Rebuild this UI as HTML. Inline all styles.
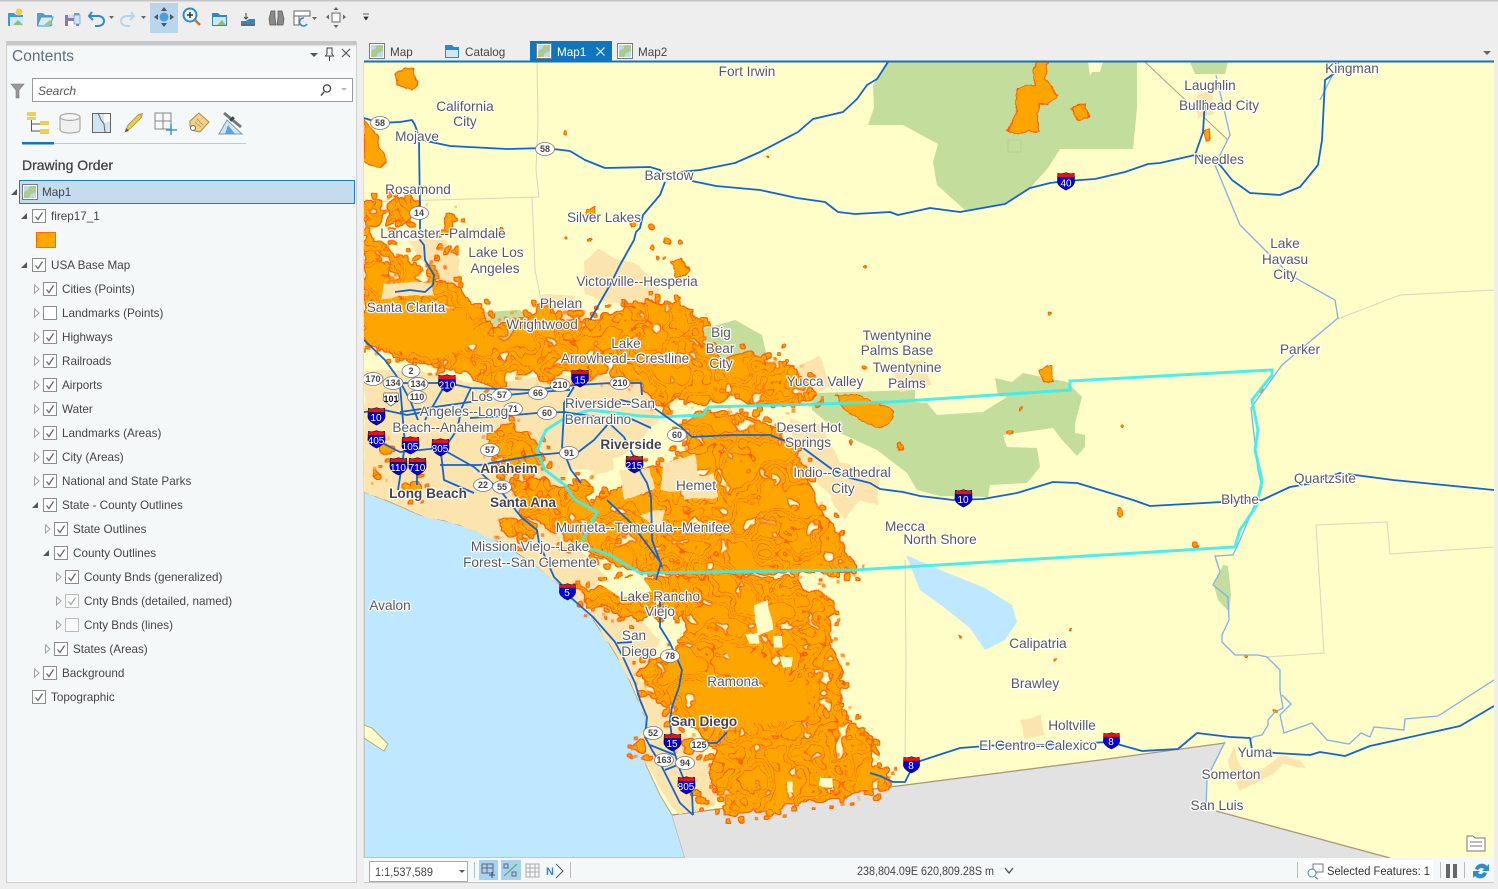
<!DOCTYPE html>
<html><head><meta charset="utf-8"><title>Map</title>
<style>
html,body{margin:0;padding:0;background:#eee;overflow:hidden}
svg{display:block}
text{font-family:"Liberation Sans",sans-serif}
.t{font-size:11.7px;fill:#444}
.m text{font-size:13.6px;fill:#58585e;text-anchor:middle;paint-order:stroke;stroke:#fff;stroke-width:2.4px;stroke-linejoin:round}
.m text.b{font-weight:bold;fill:#44444a;font-size:13.6px}
.h{fill:none;stroke:#0f64d8;stroke-width:1.8;stroke-linejoin:round}
.o text{font-size:9px;font-weight:bold;fill:#444;text-anchor:middle}
.o ellipse{fill:#fff;stroke:#777;stroke-width:.8}
.i text{font-size:10px;fill:#fff;text-anchor:middle}
.c{fill:none;stroke:#d8d6c0;stroke-width:1}
.f{fill:#ffa500;stroke:#ff6000;stroke-width:1.2}
.p{fill:#fce4ae}
.y{fill:#fffdc8}
</style></head><body>
<svg xmlns="http://www.w3.org/2000/svg" xmlns:xlink="http://www.w3.org/1999/xlink" width="1498" height="889" viewBox="0 0 1498 889">
<defs>
<filter id="r" filterUnits="userSpaceOnUse" x="364" y="62" width="1134" height="796"><feTurbulence type="fractalNoise" baseFrequency=".09" numOctaves="3" seed="4"/><feDisplacementMap in="SourceGraphic" scale="7" xChannelSelector="R" yChannelSelector="G"/></filter>
<filter id="s" filterUnits="userSpaceOnUse" x="364" y="62" width="1134" height="796"><feTurbulence type="fractalNoise" baseFrequency=".05" numOctaves="2" seed="9"/><feDisplacementMap in="SourceGraphic" scale="6" xChannelSelector="R" yChannelSelector="G"/></filter>
<filter id="fire" filterUnits="userSpaceOnUse" x="364" y="62" width="1134" height="796" color-interpolation-filters="sRGB">
<feTurbulence type="fractalNoise" baseFrequency=".07" numOctaves="3" seed="4" result="n0"/>
<feDisplacementMap in="SourceGraphic" in2="n0" scale="14" xChannelSelector="R" yChannelSelector="G" result="D"/>
<feTurbulence type="fractalNoise" baseFrequency=".11" numOctaves="2" seed="7" result="n1"/>
<feColorMatrix in="n1" type="matrix" values="0 0 0 0 0  0 0 0 0 0  0 0 0 0 0  20 0 0 0 -12.400" result="B"/>
<feMorphology in="D" operator="dilate" radius="7" result="Dd"/>
<feComposite in="B" in2="Dd" operator="in" result="F"/>
<feTurbulence type="fractalNoise" baseFrequency=".06" numOctaves="2" seed="21" result="n2"/>
<feColorMatrix in="n2" type="matrix" values="0 0 0 0 0  0 0 0 0 0  0 0 0 0 0  0 20 0 0 -12.800" result="H"/>
<feComposite in="D" in2="H" operator="out" result="Dh"/>
<feMerge result="U"><feMergeNode in="Dh"/><feMergeNode in="F"/></feMerge>
<feMorphology in="U" operator="dilate" radius="1" result="Ud"/>
<feFlood flood-color="#ff5f00" result="c1"/><feComposite in="c1" in2="Ud" operator="in" result="red"/>
<feFlood flood-color="#ffa500" result="c2"/><feComposite in="c2" in2="U" operator="in" result="org"/>
<feTurbulence type="fractalNoise" baseFrequency=".025" numOctaves="3" seed="12" result="n3"/>
<feComponentTransfer in="n3" result="n4"><feFuncR type="discrete" tableValues="0 0 0 0 0 0 0 0 0 0 0 0 0 0 0 0 0 0 0 0 0 0 0 0 0 0 0 0 0 0 0 0 0 0 0 0 0 0 1 0 0 0 0 0 0 1 0 0 0 0 0 0 1 0 0 0 0 0 0 1 0 0 0 0 0 0 0 0 0 0 0 0 0 0 0 0 0 0 0 0 0 0 0 0 0 0 0 0 0 0 0 0 0 0 0 0"/></feComponentTransfer>
<feColorMatrix in="n4" type="matrix" values="0 0 0 0 1  0 0 0 0 .37  0 0 0 0 0  1 0 0 0 0" result="L"/>
<feComposite in="L" in2="U" operator="in" result="Lc"/>
<feMerge><feMergeNode in="red"/><feMergeNode in="org"/><feMergeNode in="Lc"/></feMerge>
</filter>
<clipPath id="mc"><rect x="364" y="62" width="1130" height="796"/></clipPath>
<symbol id="sh" viewBox="0 0 20 20" overflow="visible"><path d="M1 1.500Q5 3 10 .8Q15 3 19 1.500L19.500 11Q19 16 10 20Q1 16 .5 11Z" fill="#0000e0" stroke="#111" stroke-width=".8"/><path d="M1 1.500Q5 3 10 .8Q15 3 19 1.500L19.300 6H.7Z" fill="#e81020" stroke="#111" stroke-width=".5"/></symbol>
<symbol id="cb" viewBox="0 0 14 14"><rect x=".5" y=".5" width="13" height="13" fill="#fff" stroke="#8c8c8c"/><path d="M3.500 7.500L6 10.500L10.500 3.500" fill="none" stroke="#666" stroke-width="1.300"/></symbol>
<symbol id="cu" viewBox="0 0 14 14"><rect x=".5" y=".5" width="13" height="13" fill="#fff" stroke="#8c8c8c"/></symbol>
<symbol id="mi" viewBox="0 0 16 16"><rect x=".5" y=".5" width="15" height="15" fill="#fff" stroke="#7a7a7a"/><rect x="2" y="2" width="12" height="12" fill="#bcd9ee"/><path d="M2 14V8L6 6L8 2H14V8L9 10L7 14Z" fill="#a9cb8e"/></symbol>
<symbol id="ar" viewBox="0 0 8 10"><path d="M1.500 1L6 5L1.500 9Z" fill="#fff" stroke="#a0a0a0"/></symbol>
<symbol id="ad" viewBox="0 0 8 8"><path d="M7 1V7H1Z" fill="#555"/></symbol>
</defs>

<!-- chrome -->
<rect width="1498" height="889" fill="#eeeeee"/>
<rect width="1498" height="1.500" fill="#c4c4c4"/>

<!-- toolbar -->
<rect x="150" y="3" width="28" height="30" fill="#b9d6ec"/>
<g>
<path d="M8 13h6l2 2h7v11H8Z" fill="#3a9ad6"/><path d="M10 17h13v9H10Z" fill="#d3e9f7"/><path d="M13 25l5-5 5 5z" fill="#8fbf7a"/><circle cx="19" cy="12" r="3.500" fill="#f2cc4e"/>
<path d="M37 13h6l2 2h7v11H37Z" fill="#5a9bc9"/><path d="M38 24l3-7h12l-3 9H38Z" fill="#d6ebf8" stroke="#3a9ad6"/><path d="M44 25l6-5 3 5z" fill="#9cc48a"/>
<rect x="65" y="15" width="14" height="11" fill="#8779b5"/><rect x="68" y="21" width="8" height="5" fill="#fff"/><rect x="68" y="15" width="8" height="3" fill="#ddd"/><path d="M74 13h5l1 2h-6z" fill="#6aa0c8"/><rect x="74" y="15" width="6" height="9" fill="#cfe4f2" stroke="#6c9cc0" stroke-width=".7"/>
<path d="M92 12L89 16L93 20M90 16H99Q104 17 104 21Q104 25 99 26H95" fill="none" stroke="#2f8bcb" stroke-width="2"/><path d="M109 16h5l-2.500 3z" fill="#666"/>
<path d="M131 12L134 16L130 20M133 16H126Q121 17 121 21Q121 25 126 26H130" fill="none" stroke="#b5d5ea" stroke-width="2"/><path d="M141 16h5l-2.500 3z" fill="#666"/>
<circle cx="164" cy="17" r="4.500" fill="#4a9fd8"/><path d="M164 7l3 4h-6zM164 27l3-4h-6zM154 17l4-3v6zM174 17l-4-3v6z" fill="#555"/>
<circle cx="190" cy="15" r="6.500" fill="#e8f3fa" stroke="#2f8bcb" stroke-width="2"/><path d="M187 15h6M190 12v6" stroke="#333" stroke-width="1.500"/><path d="M195 20l5 5" stroke="#b07a3a" stroke-width="2.500"/>
<path d="M212 13h6l2 2h7v11h-15Z" fill="#2f87c3"/><path d="M213 17h13v8h-13Z" fill="#cfe6f6"/><path d="M217 25l5-5 4 5z" fill="#8fbf7a"/>
<path d="M241 24h14v-5h-6l-3 2h-5z" fill="#2f87c3"/><path d="M241 24h14v2h-14z" fill="#6a6a6a"/><path d="M244 17l2 2 2-2M246 13v6" stroke="#444" fill="none"/>
<path d="M271 11h4v6l1 8h-6l-1-6zM278 11h4l2 8-1 6h-6l1-8z" fill="#8a8a8a" stroke="#555" stroke-width=".7"/>
<path d="M294 11h16v5h-16zM294 16h5v9h-5z" fill="#fff" stroke="#666"/><path d="M304 18a4 4 0 1 0 3 6" fill="none" stroke="#2f8bcb" stroke-width="1.600"/><path d="M312 17h5l-2.500 3z" fill="#666"/>
<rect x="332" y="13" width="8" height="9" fill="#fff" stroke="#666"/><path d="M336 7l2.500 3h-5zM336 28l2.500-3h-5zM326 17l3-2.500v5zM346 17l-3-2.500v5z" fill="#666"/>
<path d="M363 14h6M364 17h4l-2 3z" fill="#333" stroke="#333" stroke-width=".7"/>
</g>

<!-- contents panel -->
<rect x="6" y="41" width="351" height="842" fill="#f5f8f8"/>
<rect x="6" y="41" width="351" height="4.500" fill="#c6c6c6"/>
<rect x="6" y="41" width="1" height="842" fill="#d0d0d0"/>
<rect x="356" y="41" width="1" height="842" fill="#d0d0d0"/>
<rect x="6" y="882" width="351" height="1" fill="#d0d0d0"/>
<text x="12" y="61" style="font-size:15.500px;fill:#5f7080">Contents</text>
<path d="M310 53h8l-4 4z" fill="#555"/>
<path d="M327 48h5v6l1.500 2h-8l1.500-2zM329.500 56v5" fill="none" stroke="#444"/>
<path d="M342 49l8 8M350 49l-8 8" stroke="#555" stroke-width="1.200"/>
<path d="M11 84h13l-5 6v8h-3v-8z" fill="#999" stroke="#777" stroke-width=".6"/>
<rect x="32.500" y="78.500" width="320" height="23" fill="#fff" stroke="#9a9a9a"/>
<text x="38" y="95" style="font-size:12px;font-style:italic;fill:#555">Search</text>
<circle cx="327" cy="88.500" r="3.600" fill="none" stroke="#444" stroke-width="1.300"/><path d="M324 92l-3 3.500" stroke="#444" stroke-width="1.500"/>
<path d="M341 88h6l-3 3z" fill="#bbb"/>
<!-- tab icons -->
<rect x="27" y="112" width="9" height="4" fill="#efd04e"/><rect x="27" y="117" width="9" height="3" fill="#efd04e"/><path d="M31.500 120V131H40M31.500 124H40" fill="none" stroke="#555"/><rect x="40" y="121" width="9" height="4" fill="#efd04e"/><rect x="40" y="129" width="9" height="5" fill="#efd04e"/>
<path d="M60 117v12q0 4 10 4t10-4v-12" fill="#f0f0f0" stroke="#aaa" stroke-width="1.200"/><ellipse cx="70" cy="117" rx="10" ry="3.500" fill="#f4f4f4" stroke="#aaa" stroke-width="1.200"/>
<rect x="92.500" y="113.500" width="18" height="19" fill="#cfe4f5" stroke="#666"/><path d="M98 113l3 7 3 4 1 8M110 116l-6 6" fill="none" stroke="#666"/><path d="M104 114h6v7l-6 2z" fill="#fff"/>
<path d="M125 132l3-7 11-11 3 3-11 11z" fill="#e8c94a" stroke="#a48f2a" stroke-width=".7"/><path d="M125 132l1-4 3 3z" fill="#555"/><path d="M139 114l3 3 1-4z" fill="#d88"/>
<path d="M155 113h16v16h-16zM155 121h16M163 113v16" fill="none" stroke="#888"/><path d="M171 124v11M166 130h11" stroke="#3f94cf" stroke-width="1.500"/>
<path d="M190 121l9-8 10 9-9 10-5-1-5-5z" fill="#efd08a" stroke="#b48a38"/><circle cx="193" cy="128" r="2.500" fill="#fff" stroke="#666"/><path d="M197 119l6 6M195 122l6 5" stroke="#b48a38" stroke-width=".7"/>
<path d="M219 134l8-14 15 14z" fill="#cfe4f5" stroke="#7a9cb8"/><path d="M225 134l3-9 7 9z" fill="#5ea3d4"/><path d="M224 113l17 14" stroke="#777" stroke-width="3"/><path d="M231 118l2 2" stroke="#444" stroke-width="5"/>
<rect x="54" y="143" width="192" height="1" fill="#c8c8c8"/>
<rect x="22" y="142" width="32" height="2.500" fill="#0f75bc"/>
<text x="22" y="170" style="font-size:14px;fill:#3f3f3f;stroke:#3f3f3f;stroke-width:.25px">Drawing Order</text>
<rect x="19.500" y="180.500" width="335" height="23" fill="#c5dcef" stroke="#1a7fc1"/>
<use xlink:href="#ad" x="10" y="188" width="8" height="8"/>
<use xlink:href="#mi" x="22" y="184" width="16" height="16"/>
<text class="t" x="42" y="196">Map1</text>

<use xlink:href="#ad" x="20" y="212" width="8" height="8"/>
<use xlink:href="#cb" x="32" y="209" width="14" height="14"/><text class="t" x="51" y="220">firep17_1</text>
<rect x="36.500" y="232.500" width="19" height="15" fill="#ffa900" stroke="#ff6a00"/>
<use xlink:href="#ad" x="20" y="261" width="8" height="8"/>
<use xlink:href="#cb" x="32" y="258" width="14" height="14"/><text class="t" x="51" y="269">USA Base Map</text>

<g>
<use xlink:href="#ar" x="33" y="284" width="8" height="10"/><use xlink:href="#cb" x="43" y="282" width="14" height="14"/><text class="t" x="62" y="293">Cities (Points)</text>
<use xlink:href="#ar" x="33" y="308" width="8" height="10"/><use xlink:href="#cu" x="43" y="306" width="14" height="14"/><text class="t" x="62" y="317">Landmarks (Points)</text>
<use xlink:href="#ar" x="33" y="332" width="8" height="10"/><use xlink:href="#cb" x="43" y="330" width="14" height="14"/><text class="t" x="62" y="341">Highways</text>
<use xlink:href="#ar" x="33" y="356" width="8" height="10"/><use xlink:href="#cb" x="43" y="354" width="14" height="14"/><text class="t" x="62" y="365">Railroads</text>
<use xlink:href="#ar" x="33" y="380" width="8" height="10"/><use xlink:href="#cb" x="43" y="378" width="14" height="14"/><text class="t" x="62" y="389">Airports</text>
<use xlink:href="#ar" x="33" y="404" width="8" height="10"/><use xlink:href="#cb" x="43" y="402" width="14" height="14"/><text class="t" x="62" y="413">Water</text>
<use xlink:href="#ar" x="33" y="428" width="8" height="10"/><use xlink:href="#cb" x="43" y="426" width="14" height="14"/><text class="t" x="62" y="437">Landmarks (Areas)</text>
<use xlink:href="#ar" x="33" y="452" width="8" height="10"/><use xlink:href="#cb" x="43" y="450" width="14" height="14"/><text class="t" x="62" y="461">City (Areas)</text>
<use xlink:href="#ar" x="33" y="476" width="8" height="10"/><use xlink:href="#cb" x="43" y="474" width="14" height="14"/><text class="t" x="62" y="485">National and State Parks</text>
<use xlink:href="#ad" x="31" y="501" width="8" height="8"/><use xlink:href="#cb" x="43" y="498" width="14" height="14"/><text class="t" x="62" y="509">State - County Outlines</text>
<use xlink:href="#ar" x="44" y="524" width="8" height="10"/><use xlink:href="#cb" x="54" y="522" width="14" height="14"/><text class="t" x="73" y="533">State Outlines</text>
<use xlink:href="#ad" x="42" y="549" width="8" height="8"/><use xlink:href="#cb" x="54" y="546" width="14" height="14"/><text class="t" x="73" y="557">County Outlines</text>
<use xlink:href="#ar" x="55" y="572" width="8" height="10"/><use xlink:href="#cb" x="65" y="570" width="14" height="14"/><text class="t" x="84" y="581">County Bnds (generalized)</text>
<use xlink:href="#ar" x="55" y="596" width="8" height="10"/><use xlink:href="#cb" x="65" y="594" width="14" height="14" opacity=".55"/><text class="t" x="84" y="605">Cnty Bnds (detailed, named)</text>
<use xlink:href="#ar" x="55" y="620" width="8" height="10"/><use xlink:href="#cu" x="65" y="618" width="14" height="14" opacity=".55"/><text class="t" x="84" y="629">Cnty Bnds (lines)</text>
<use xlink:href="#ar" x="44" y="644" width="8" height="10"/><use xlink:href="#cb" x="54" y="642" width="14" height="14"/><text class="t" x="73" y="653">States (Areas)</text>
<use xlink:href="#ar" x="33" y="668" width="8" height="10"/><use xlink:href="#cb" x="43" y="666" width="14" height="14"/><text class="t" x="62" y="677">Background</text>
<use xlink:href="#cb" x="32" y="690" width="14" height="14"/><text class="t" x="51" y="701">Topographic</text>
</g>

<!-- tabs -->
<use xlink:href="#mi" x="369" y="43" width="16" height="16"/><text class="t" x="390" y="56">Map</text>
<path d="M445 45h7l2 2h5v11h-14z" fill="#2f87c3"/><path d="M446 50h12v7h-12z" fill="#cfe6f6"/><text class="t" x="465" y="56">Catalog</text>
<rect x="530" y="41" width="82" height="21" fill="#0f75bc"/>
<use xlink:href="#mi" x="536" y="43" width="16" height="16"/><text x="557" y="56" style="font-size:11.700px;fill:#fff">Map1</text>
<path d="M596.500 47.500l8 8M604.500 47.500l-8 8" stroke="#fff" stroke-width="1.200"/>
<use xlink:href="#mi" x="617" y="43" width="16" height="16"/><text class="t" x="638" y="56">Map2</text>
<path d="M1483 51h8l-4 4z" fill="#666"/>

<!-- MAP -->
<g clip-path="url(#mc)">
<rect x="364" y="62" width="1130" height="796" fill="#fffdc8"/>
<!-- ocean -->
<path d="M364 492L390 502L420 515L450 522L480 532L505 545L535 565L560 585L590 615L610 645L625 670L640 705L648 725L640 735L646 765L660 795L672 815L685 858H364Z" fill="#bee8ff" stroke="#b8a888" stroke-width="1"/>
<path d="M364 725L372 728L388 744L384 751L364 738Z" fill="#fffdc8" stroke="#b8a888"/>
<!-- mexico -->
<path d="M672 815L1100 760L1225 743L1207 778L1206 810L1216 811L1390 858H685Z" fill="#e2e2e2"/>
<path d="M672 815L1100 760L1225 743M1216 811L1390 858" fill="none" stroke="#a8987a" stroke-width="1.300"/>
<!-- county lines -->
<g class="c">
<path d="M537 62L538 122L536 170L539 197L364 202"/><path d="M532 197L535 270L541 300"/>
<path d="M905 560L906 660L905 762"/>
<path d="M1316 525L1387 522L1390 554L1494 547M1316 525L1324 653L1267 657"/>
<path d="M1335 320L1400 295L1494 290"/>
</g>
<path d="M1145 62L1228 140" fill="none" stroke="#a8a08a"/>
<!-- parks -->
<g fill="#c3dd9c">
<path d="M888 62L873 85L874 108L868 125L903 125L938 144L933 162L937 185L965 210L1006 204L1030 188L1048 168L1060 149L1133 149L1137 108L1137 62Z"/>
<path d="M812 393L915 390L915 402L927 403L937 415L983 412L1007 397L998 395L995 378L1012 382L1023 373L1067 382L1082 397L1075 423L1075 433L1085 435L1085 447L1077 456L1062 440L1053 428L1003 435L1007 447L1037 448L1040 467L1027 483L990 485L988 497L940 496L917 490L907 473L877 450L840 433L812 410Z"/>
<path d="M482 312L520 310L545 330L560 355L530 345L510 340L480 340Z"/>
<path d="M700 330L735 320L762 335L770 370L720 380L705 360Z"/>
<path d="M1223 565L1228 566L1231 595L1229 612L1218 600L1214 585Z"/>
<path d="M1190 62L1228 62L1225 74L1195 74Z"/>
<path d="M740 470L770 468L780 500L745 495Z"/>
<path d="M715 605L735 610L740 625L720 622Z"/>
<path d="M790 715L825 712L825 730L790 728Z"/>
</g>
<path d="M1088 62H1103L1100 72L1092 72L1090 76Z" fill="#fffdc8"/>
<rect x="1008" y="140" width="13" height="12" fill="none" stroke="#b4d38f"/>
<!-- urban -->
<g class="p" filter="url(#s)">
<path d="M364 370L420 370L480 385L560 375L640 375L660 420L640 440L600 470L570 470L555 500L570 540L600 570L620 590L640 620L660 640L640 680L670 710L690 740L715 770L715 805L680 815L660 790L645 760L640 735L648 725L640 705L625 670L610 645L590 615L560 585L535 565L505 545L480 532L450 522L420 515L390 502L364 492Z"/>
<path d="M408 240L445 240L460 260L460 285L450 295L435 290L425 265Z"/>
<path d="M583 262L600 250L612 258L640 265L660 290L650 310L600 300L585 295Z"/>
<path d="M540 295L575 295L590 320L560 320Z"/>
<path d="M790 370L820 355L830 385L800 400Z"/>
<path d="M890 365L925 360L930 385L900 392Z"/>
<path d="M790 420L820 425L840 462L880 475L878 505L860 500L845 520L825 490L805 470L790 450Z"/>
<path d="M1020 720L1040 714L1044 735L1024 738Z"/>
<path d="M1232 745L1240 765L1250 775L1262 770L1280 755L1300 760L1305 770L1285 765L1262 780L1240 790L1228 760Z"/>
<path d="M1196 94L1212 92L1214 115L1198 118Z"/>
</g>
<!-- main fire -->
<g filter="url(#fire)" fill="#000">
<path d="M364 237L385 245L400 257L415 265L431 277L444 280L460 290L464 300L481 305L484 325L510 325L530 320L545 305L560 320L581 320L600 318L617 313L640 303L664 303L690 310L705 330L708 345L725 360L745 352L775 360L800 375L815 395L790 408L755 404L730 395L700 405L680 398L660 405L640 385L620 378L600 372L590 382L570 370L545 380L520 370L500 388L470 376L445 368L420 362L395 356L364 345Z"/>
<path d="M490 432L510 426L530 435L545 458L530 478L505 470L490 450Z"/>
<path d="M514 480L540 478L560 490L585 480L600 500L620 490L640 470L670 462L690 445L680 425L700 412L740 415L780 430L800 460L812 495L830 525L850 555L856 572L800 572L720 575L640 572L600 555L560 538L540 520L520 515Z"/>
<path d="M600 590L635 578L700 575L790 578L812 592L830 600L828 640L842 670L838 700L848 722L872 738L870 768L888 768L886 790L820 800L723 815L720 790L708 778L718 752L690 722L668 712L650 692L640 668L675 652L690 620L672 605L640 620L615 612Z"/>
<path d="M580 590L600 586L608 600L590 610Z"/>
<path d="M364 205L376 200L388 208L378 222L364 232Z"/>
<path d="M390 205L408 195L418 205L402 225L388 225Z"/>
<circle cx="385" cy="448" r="5"/><circle cx="415" cy="488" r="6"/><circle cx="380" cy="478" r="5"/>
<circle cx="510" cy="525" r="9"/><circle cx="525" cy="530" r="10"/><circle cx="640" cy="745" r="6"/><circle cx="688" cy="745" r="6"/><circle cx="700" cy="800" r="4"/>
<circle cx="444" cy="250" r="5"/><circle cx="432" cy="270" r="5"/><circle cx="450" cy="222" r="5"/>
</g>
<!-- solid fire bodies -->
<g fill="#ffa500" filter="url(#s)">
<path d="M366 312L400 302L440 305L470 320L478 345L440 358L395 350L366 340Z"/>
<path d="M702 692L805 682L810 716L770 724L702 722Z"/>
<path d="M725 640L770 662L790 680L730 685Z"/>
</g>
<!-- isolated fires -->
<g class="f" filter="url(#r)">
<path d="M364 120L375 132L380 150L387 162L380 168L368 165L364 160Z"/>
<path d="M394 73L412 68L417 82L412 90L398 85Z"/>
<path d="M1037 62L1048 62L1045 78L1058 95L1048 106L1038 105L1037 120L1040 130L1033 132L1023 133L1008 132L1017 110L1018 87L1035 84L1033 72Z"/>
<path d="M1070 108L1087 105L1087 118L1078 120Z"/>
<path d="M836 395L860 395L880 405L895 410L890 425L875 428L860 420L845 410Z"/>
<path d="M1040 370L1050 366L1052 380L1044 382Z"/>
<path d="M672 262L682 258L690 270L686 275L676 278Z"/>
<path d="M585 210L596 206L594 214L587 216Z"/>
<path d="M1203 132L1210 130L1208 140L1205 140Z"/>
<circle cx="565" cy="133" r="1.500"/><circle cx="633" cy="224" r="2.500"/><circle cx="650" cy="228" r="3"/><circle cx="668" cy="240" r="4"/><circle cx="652" cy="248" r="2.500"/><circle cx="680" cy="242" r="2"/><circle cx="658" cy="258" r="1.500"/><circle cx="665" cy="258" r="1.500"/><circle cx="590" cy="239" r="1.500"/><circle cx="565" cy="238" r="1.500"/><circle cx="500" cy="230" r="1.500"/>
<circle cx="1120" cy="512" r="3"/><circle cx="1196" cy="544" r="2.500"/><circle cx="1124" cy="426" r="1.500"/><circle cx="850" cy="442" r="2"/><circle cx="900" cy="446" r="3"/><circle cx="1010" cy="432" r="2"/><circle cx="1020" cy="408" r="1.500"/><circle cx="865" cy="368" r="1.500"/><circle cx="866" cy="346" r="1.500"/><circle cx="785" cy="346" r="2"/><circle cx="786" cy="360" r="2"/>
<circle cx="865" cy="267" r="1.500"/><circle cx="1050" cy="314" r="1.500"/><circle cx="767" cy="157" r="1"/>
<circle cx="1070" cy="630" r="1"/><circle cx="1055" cy="660" r="1"/><circle cx="960" cy="635" r="1"/><circle cx="1262" cy="391" r="2"/><circle cx="1276" cy="712" r="1.500"/><circle cx="1246" cy="658" r="1.500"/>
</g>
<!-- holes in fire -->
<g filter="url(#s)">
<g class="y">
<path d="M753 605L768 602L772 630L757 635Z"/><path d="M745 634L757 632L760 644L748 645Z"/><path d="M773 637L782 637L782 647L774 647Z"/><path d="M780 657L793 657L793 667L782 667Z"/><path d="M787 783L793 783L793 792L787 792Z"/><path d="M820 777L833 777L833 787L820 787Z"/><path d="M598 582L640 575L652 590L620 598Z"/>
</g>
<g class="p">
<path d="M384 284L431 282L433 296L400 296L382 300Z"/>
<path d="M665 462L695 455L700 475L680 492L660 490Z"/><path d="M678 478L714 473L718 497L684 500Z"/><path d="M620 470L650 468L655 490L625 500Z"/><path d="M590 450L610 445L615 470L595 475Z"/>
<path d="M640 515L665 510L660 530Z"/>
<path d="M630 420L650 418L648 432L632 434Z"/>
</g>
</g>
<!-- water -->
<path d="M906 555L945 572L985 588L1012 605L1017 622L1005 640L985 650L970 628L945 608L920 590Z" fill="#bee8ff"/>
<!-- rivers -->
<g fill="none" stroke="#7eb2e8" stroke-width="1.300">
<path d="M1225 742L1207 778L1206 810"/>
<path d="M1216 75L1230 135L1215 165L1240 225L1290 275L1335 300L1338 318L1282 365L1251 408L1258 470L1262 487L1240 540L1233 555L1215 556L1220 572L1213 585L1228 597L1229 620L1222 635L1222 642L1235 655L1245 655L1258 655L1267 657L1280 670L1280 690L1283 708L1275 712L1268 720L1268 725L1262 735L1253 737L1250 740"/>
<path d="M1282 695L1291 704L1280 715L1284 733L1312 723L1327 740L1349 744L1361 733L1370 737L1374 727L1404 730L1405 719L1438 716L1494 680"/>
<path d="M1320 100L1340 60"/>
</g>
<!-- state border -->
<path d="M537 450L546 430L565 418L590 410L640 416L660 417L703 415L708 407L890 402L1070 390L1070 381L1272 370L1272 375L1252 400L1258 430L1255 450L1262 480L1257 505L1240 530L1235 547L855 570L640 573L610 555L580 545L597 512L575 500L565 485L545 470L537 450" fill="none" stroke="#3aeeee" stroke-width="3" opacity=".92"/>
<!-- highways -->
<g class="h">
<path d="M364 118L380 123L400 122L412 120L415 125L420 140L431 142L450 146L507 149L545 148L570 151L585 160L605 168L650 167L660 170L665 175"/>
<path d="M680 172L700 170L735 163L760 152L798 132L813 119L843 112L857 99L867 85L877 79L888 62"/>
<path d="M692 181L716 186L760 190L797 198L825 202L838 212L855 214L890 212L898 215L930 208L960 212L1005 204L1030 188L1050 183L1066 181L1095 179L1125 172L1148 164L1160 163L1195 155L1208 158L1220 165L1232 180L1250 193L1280 195L1300 187L1318 165L1322 140L1325 80L1345 66"/>
<path d="M1205 100L1203 132L1195 155"/>
<path d="M419 142L420 213L420 240L424 245L425 260L434 275L433 285L425 292L410 290L395 292"/>
<path d="M665 182L660 195L643 215L640 228L636 232L634 240L620 265L610 285L590 320"/>
<path d="M395 383L447 383L471 388L531 390L577 385L611 383L641 383L642 395"/>
<path d="M364 412L384 410L407 415L430 411M400 412L470 402L497 396L538 392L570 390"/>
<path d="M470 418L504 416L537 413L564 412L597 417L627 417L651 428"/>
<path d="M564 403L597 403L621 400L654 408L681 427L692 437L731 435L770 435L803 448L833 470L850 478L870 483L880 489L903 492L920 496L953 500L983 499L1017 493L1053 482L1077 483L1133 500L1150 506L1222 502L1262 500L1290 487L1313 483L1340 473L1393 480L1494 490"/>
<path d="M364 340L385 360L398 378L410 400L418 420"/>
<path d="M376 440L400 452L440 448L474 467L500 490L521 517L537 530L539 543L554 577L567 590L570 597L593 617L615 642L623 657L635 683L640 700L647 717L645 737L652 750L660 763L680 803L693 815"/>
<path d="M400 385L405 445L398 490M417 465L417 485M445 385L425 420M471 388L462 407L457 430L441 453L444 480L474 493"/>
<path d="M440 465L480 465L537 455L559 453L577 453L594 440L609 423"/>
<path d="M574 387L564 403L564 413L562 447L571 470L581 483M607 500L631 523L661 563L656 580"/>
<path d="M609 423L624 437L634 457L641 473L647 483L651 497L652 540L662 567"/>
<path d="M660 597L660 627L670 643L682 670L679 687L672 707L670 720L672 741"/>
<path d="M672 745L680 770L686 785L692 793L693 815"/>
<path d="M617 643L632 642M698 743L717 743L727 732"/>
<path d="M650 745L675 755M665 770L690 760"/>
<path d="M870 773L880 776L893 782L905 782L910 772L911 764L960 748L1000 745L1040 745L1110 742L1142 751L1178 749L1197 733L1230 737L1250 738L1252 750L1275 753L1310 755L1320 752L1345 756L1370 746L1460 726L1494 706"/>
</g>
<!-- shields -->
<g class="i">
<use xlink:href="#sh" x="1056" y="172" width="20" height="18"/><text x="1066" y="186.500">40</text>
<use xlink:href="#sh" x="437" y="374" width="20" height="18"/><text x="447" y="388.500">210</text>
<use xlink:href="#sh" x="570" y="369" width="20" height="18"/><text x="580" y="383.500">15</text>
<use xlink:href="#sh" x="367" y="407" width="19" height="18"/><text x="376" y="421">10</text>
<use xlink:href="#sh" x="367" y="430" width="19" height="18"/><text x="376" y="444">405</text>
<use xlink:href="#sh" x="401" y="436" width="19" height="18"/><text x="410" y="450">105</text>
<use xlink:href="#sh" x="431" y="438" width="19" height="18"/><text x="440" y="452">805</text>
<use xlink:href="#sh" x="389" y="457" width="19" height="18"/><text x="398" y="471">110</text>
<use xlink:href="#sh" x="408" y="457" width="19" height="18"/><text x="417" y="471">710</text>
<use xlink:href="#sh" x="625" y="455" width="19" height="18"/><text x="634" y="469">215</text>
<use xlink:href="#sh" x="558" y="583" width="19" height="17"/><text x="567" y="596">5</text>
<use xlink:href="#sh" x="663" y="733" width="19" height="18"/><text x="672" y="747">15</text>
<use xlink:href="#sh" x="677" y="776" width="19" height="18"/><text x="686" y="790">805</text>
<use xlink:href="#sh" x="902" y="756" width="19" height="17"/><text x="911" y="769">8</text>
<use xlink:href="#sh" x="1102" y="732" width="19" height="17"/><text x="1111" y="745">8</text>
<use xlink:href="#sh" x="954" y="489" width="19" height="18"/><text x="963" y="503">10</text>
</g>
<g class="o">
<ellipse cx="380" cy="123" rx="9.500" ry="6.500"/><text x="380" y="126">58</text>
<ellipse cx="545" cy="149" rx="9.500" ry="6.500"/><text x="545" y="152">58</text>
<ellipse cx="419" cy="213" rx="9.500" ry="6.500"/><text x="419" y="216">14</text>
<ellipse cx="411" cy="371" rx="9" ry="6.500"/><text x="411" y="374">2</text>
<ellipse cx="373" cy="379" rx="10" ry="6.500"/><text x="373" y="382">170</text>
<ellipse cx="393" cy="383" rx="10" ry="6.500"/><text x="393" y="386">134</text>
<ellipse cx="418" cy="384" rx="10" ry="6.500"/><text x="418" y="387">134</text>
<ellipse cx="417" cy="397" rx="9.500" ry="6.500"/><text x="417" y="400">110</text>
<path d="M384 393h14l1 7-8 6-8-6z" fill="#fff" stroke="#555" stroke-width=".7"/><text x="391" y="402" style="fill:#111">101</text>
<ellipse cx="502" cy="395" rx="9.500" ry="6.500"/><text x="502" y="398">57</text>
<ellipse cx="538" cy="393" rx="9.500" ry="6.500"/><text x="538" y="396">66</text>
<ellipse cx="560" cy="385" rx="10" ry="6.500"/><text x="560" y="388">210</text>
<ellipse cx="620" cy="383" rx="10" ry="6.500"/><text x="620" y="386">210</text>
<ellipse cx="513" cy="409" rx="9.500" ry="6.500"/><text x="513" y="412">71</text>
<ellipse cx="547" cy="413" rx="9.500" ry="6.500"/><text x="547" y="416">60</text>
<ellipse cx="677" cy="435" rx="9.500" ry="6.500"/><text x="677" y="438">60</text>
<ellipse cx="569" cy="453" rx="9.500" ry="6.500"/><text x="569" y="456">91</text>
<ellipse cx="490" cy="450" rx="9.500" ry="6.500"/><text x="490" y="453">57</text>
<ellipse cx="483" cy="485" rx="9.500" ry="6.500"/><text x="483" y="488">22</text>
<ellipse cx="502" cy="487" rx="9.500" ry="6.500"/><text x="502" y="490">55</text>
<ellipse cx="653" cy="733" rx="9.500" ry="6.500"/><text x="653" y="736">52</text>
<ellipse cx="699" cy="745" rx="9.500" ry="6.500"/><text x="699" y="748">125</text>
<ellipse cx="664" cy="760" rx="9.500" ry="6.500"/><text x="664" y="763">163</text>
<ellipse cx="685" cy="763" rx="9.500" ry="6.500"/><text x="685" y="766">94</text>
<ellipse cx="670" cy="656" rx="9.500" ry="6.500"/><text x="670" y="659">78</text>
</g>
<!-- labels -->
<g class="m">
<text x="747" y="76">Fort Irwin</text><text x="465" y="111">California</text><text x="465" y="126">City</text><text x="417" y="141">Mojave</text><text x="418" y="194">Rosamond</text><text x="669" y="180">Barstow</text><text x="604" y="222">Silver Lakes</text><text x="443" y="238">Lancaster--Palmdale</text><text x="496" y="257">Lake Los</text><text x="495" y="273">Angeles</text><text x="637" y="286">Victorville--Hesperia</text><text x="561" y="308">Phelan</text><text x="542" y="329">Wrightwood</text><text x="406" y="312">Santa Clarita</text><text x="626" y="348">Lake</text><text x="625" y="363">Arrowhead--Crestline</text><text x="721" y="337">Big</text><text x="720" y="353">Bear</text><text x="721" y="368">City</text><text x="897" y="340">Twentynine</text><text x="897" y="355">Palms Base</text><text x="907" y="372">Twentynine</text><text x="907" y="388">Palms</text><text x="825" y="386">Yucca Valley</text><text x="809" y="432">Desert Hot</text><text x="808" y="447">Springs</text><text x="842" y="477">Indio--Cathedral</text><text x="843" y="493">City</text><text x="696" y="490">Hemet</text><text x="610" y="408">Riverside--San</text><text x="598" y="424">Bernardino</text><text x="482" y="401">Los</text><text x="464" y="416">Angeles--Long</text><text x="443" y="432">Beach--Anaheim</text><text x="643" y="532">Murrieta--Temecula--Menifee</text><text x="530" y="551">Mission Viejo--Lake</text><text x="530" y="567">Forest--San Clemente</text><text x="390" y="610">Avalon</text><text x="660" y="601">Lake Rancho</text><text x="660" y="616">Viejo</text><text x="634" y="640">San</text><text x="639" y="656">Diego</text><text x="733" y="686">Ramona</text><text x="905" y="531">Mecca</text><text x="940" y="544">North Shore</text><text x="1038" y="648">Calipatria</text><text x="1035" y="688">Brawley</text><text x="1072" y="730">Holtville</text><text x="1038" y="750">El Centro--Calexico</text><text x="1255" y="757">Yuma</text><text x="1231" y="779">Somerton</text><text x="1217" y="810">San Luis</text><text x="1240" y="504">Blythe</text><text x="1325" y="483">Quartzsite</text><text x="1300" y="354">Parker</text><text x="1285" y="248">Lake</text><text x="1285" y="264">Havasu</text><text x="1285" y="279">City</text><text x="1219" y="164">Needles</text><text x="1219" y="110">Bullhead City</text><text x="1210" y="90">Laughlin</text><text x="1352" y="73">Kingman</text>
<text class="b" x="631" y="449">Riverside</text><text class="b" x="509" y="473">Anaheim</text><text class="b" x="428" y="498">Long Beach</text><text class="b" x="523" y="507">Santa Ana</text><text class="b" x="704" y="726">San Diego</text>
</g>
<!-- catalog icon -->
<path d="M1467 836h6l2 2h10v13h-18z" fill="#fff" stroke="#777"/><path d="M1470 842h12M1470 846h12" stroke="#777"/>
</g>
<rect x="364" y="60.500" width="1130" height="2" fill="#0f75bc"/>
<rect x="363" y="62" width="1" height="796" fill="#ddd"/>

<!-- status bar -->
<rect x="364" y="858" width="1130" height="24" fill="#f5f8f8"/>
<rect x="364" y="882" width="1130" height="1" fill="#c8c8c8"/>
<rect x="369.500" y="861.500" width="98" height="20" fill="#fff" stroke="#aaa"/>
<text x="375" y="876" style="font-size:11.500px;fill:#444" textLength="58" lengthAdjust="spacingAndGlyphs">1:1,537,589</text>
<path d="M459 870h6l-3 3z" fill="#555"/>
<rect x="474" y="862" width="1" height="16" fill="#bbb"/>
<rect x="479" y="860" width="19" height="20" fill="#a6d3f2"/><path d="M482 864h11v9h-11zM487 864v9M482 868h11" fill="none" stroke="#667"/><path d="M492 872v6M489 875h6" stroke="#446"/>
<rect x="501" y="860" width="20" height="20" fill="#a6d3f2"/><path d="M504 876L517 864" stroke="#5aa84a"/><path d="M504 864h4v4h-4zM512 872h4v4h-4z" fill="none" stroke="#667"/>
<path d="M526 864h13v13h-13zM526 868h13M526 872h13M530 864v13M535 864v13" fill="none" stroke="#aaa"/>
<text x="546" y="875" style="font-size:11px;font-weight:bold;fill:#2f87c3">N</text><path d="M556 864l7 7-7 7" fill="none" stroke="#555"/>
<rect x="570" y="862" width="1" height="16" fill="#bbb"/>
<text x="857" y="875" style="font-size:11.500px;fill:#444" textLength="137" lengthAdjust="spacingAndGlyphs">238,804.09E 620,809.28S m</text>
<path d="M1005 868l4 5 4-5" fill="none" stroke="#555" stroke-width="1.400"/>
<rect x="1297" y="862" width="1" height="16" fill="#bbb"/>
<rect x="1304" y="860" width="129" height="20" fill="#fff"/>
<rect x="1313" y="864" width="10" height="8" fill="#fff" stroke="#777"/><circle cx="1312" cy="873" r="4" fill="#fff" stroke="#2f87c3"/><path d="M1315 877l3 2" stroke="#b07a3a" stroke-width="1.500"/>
<text x="1327" y="875" style="font-size:11.500px;fill:#333" textLength="103" lengthAdjust="spacingAndGlyphs">Selected Features: 1</text>
<rect x="1440" y="862" width="1" height="16" fill="#bbb"/>
<rect x="1446" y="864" width="4" height="14" fill="#666"/><rect x="1453" y="864" width="4" height="14" fill="#666"/>
<rect x="1464" y="862" width="1" height="16" fill="#bbb"/>
<path d="M1475 869a7 7 0 0 1 12-3l2-2v7h-7l2-2a4 4 0 0 0-6 1zM1487 873a7 7 0 0 1-12 3l-2 2v-7h7l-2 2a4 4 0 0 0 6-1z" fill="#2f8bcb"/>
</svg>
</body></html>
